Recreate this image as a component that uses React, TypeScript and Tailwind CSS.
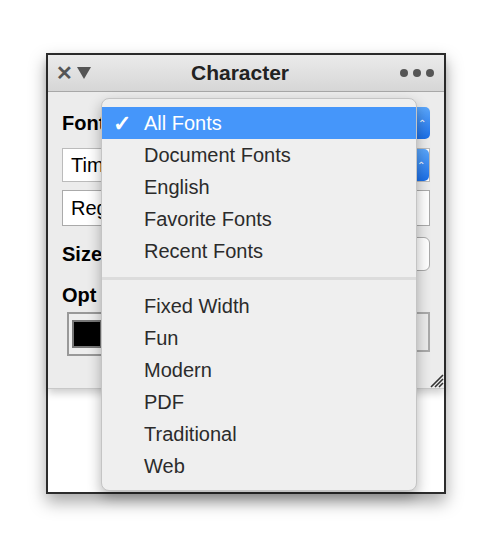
const groupA = ["Document Fonts", "English", "Favorite Fonts", "Recent Fonts"];
const groupB = ["Fixed Width", "Fun", "Modern", "PDF", "Traditional", "Web"];

function Blue({ h }: { h: string }) {
  return (
    <div className={`w-[16px] ${h} rounded-r-[5px] bg-gradient-to-b from-[#5aa6fb] to-[#1a6fe8] flex items-center justify-center text-white text-[10px]`}>
      ⌃
    </div>
  );
}

export default function App() {
  return (
    <div className="w-[493px] h-[547px] bg-white relative" style={{ fontFamily: '"Helvetica Neue", "Liberation Sans", Arial, sans-serif' }}>
      <div className="absolute left-[46px] top-[53px] w-[400px] h-[441px] border-2 border-[#2c2c2c] bg-white shadow-[0_8px_16px_rgba(0,0,0,0.35)]">
        <div className="h-[334px] bg-[#ececec] border-b border-[#c8c8c8] shadow-[0_4px_8px_rgba(0,0,0,0.2)] flex flex-col">
          <div className="h-[37px] bg-gradient-to-b from-[#ebebeb] to-[#d6d6d6] border-b border-[#a8a8a8] flex items-center px-[8px]">
            <span className="text-[#555] text-[20px] font-bold leading-none">✕</span>
            <svg width="16" height="14" viewBox="0 0 16 14" className="ml-[3px]"><path d="M1 1h14L8 13z" fill="#555" /></svg>
            <span className="flex-1 text-center text-[21px] font-bold text-[#222] mr-[12px]">Character</span>
            <div className="flex gap-[5px] mr-[2px]">
              <div className="w-[8px] h-[8px] rounded-full bg-[#555]" />
              <div className="w-[8px] h-[8px] rounded-full bg-[#555]" />
              <div className="w-[8px] h-[8px] rounded-full bg-[#555]" />
            </div>
          </div>
          <div className="flex flex-col pl-[14px] pr-[14px] pt-[14px] relative flex-1">
            <div className="flex items-center justify-between h-[34px]">
              <span className="text-[20px] font-bold text-black">Font</span>
              <Blue h="h-[32px]" />
            </div>
            <div className="mt-[8px] h-[34px] border border-[#bbb] bg-white flex items-center pl-[8px] text-[20px] justify-between">
              <span>Tim</span>
              <Blue h="h-[32px]" />
            </div>
            <div className="mt-[8px] h-[36px] border border-[#aaa] bg-white flex items-center pl-[8px] text-[20px]">Reg</div>
            <div className="mt-[10px] flex items-center justify-between h-[36px]">
              <span className="text-[20px] font-bold">Size</span>
              <div className="w-[14px] h-[34px] rounded-r-[6px] border border-[#aaa] bg-white" />
            </div>
            <span className="mt-[8px] text-[20px] font-bold">Opt</span>
            <div className="mt-[2px] flex justify-between">
              <div className="ml-[5px] w-[40px] h-[44px] border-2 border-[#999] bg-[#eee] flex items-center justify-center">
                <div className="w-[30px] h-[28px] bg-black border-2 border-[#777]" />
              </div>
              <div className="w-[40px] h-[40px] border-2 border-[#aaa]" />
            </div>
            <svg width="16" height="16" viewBox="0 0 16 16" className="absolute right-[0px] bottom-[0px]">
              <path d="M15 3L3 15M15 7L7 15M15 11L11 15" stroke="#333" strokeWidth="1.6" />
            </svg>
          </div>
        </div>
      </div>
      <div className="absolute left-[101px] top-[98px] w-[316px] h-[393px] rounded-[8px] bg-[#efefef] border border-[#c4c4c4] shadow-[0_6px_14px_rgba(0,0,0,0.3)] py-[8px] text-[20px] text-[#2b2b2b]">
        <div className="h-[32px] bg-[#4596fa] text-white flex items-center">
          <span className="w-[42px] pl-[11px] text-[22px] font-bold">✓</span>
          <span>All Fonts</span>
        </div>
        {groupA.map((t) => (
          <div key={t} className="h-[32px] flex items-center pl-[42px]">{t}</div>
        ))}
        <div className="my-[10px] h-[3px] bg-[#dcdcdc]" />
        {groupB.map((t) => (
          <div key={t} className="h-[32px] flex items-center pl-[42px]">{t}</div>
        ))}
      </div>
    </div>
  );
}
